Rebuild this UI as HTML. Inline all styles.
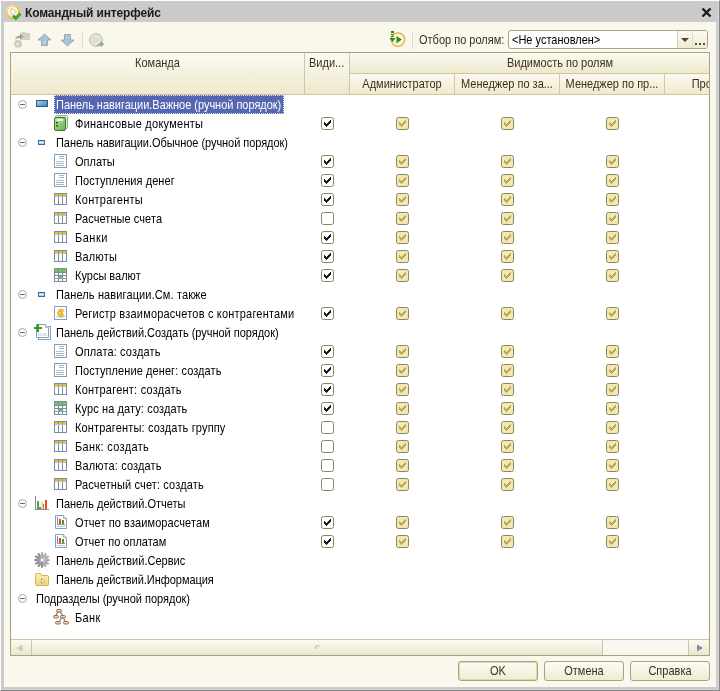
<!DOCTYPE html>
<html><head><meta charset="utf-8">
<style>
*{margin:0;padding:0;box-sizing:border-box}
html,body{width:720px;height:691px;overflow:hidden;background:#cbcbcb;font-family:"Liberation Sans",sans-serif;font-size:11px;color:#000}
.abs{position:absolute}
#frame{position:absolute;left:0;top:0;width:720px;height:691px;background:#cbcbcb;border-top:1px solid #fdfdfd;border-left:1px solid #fdfdfd;border-right:1px solid #878787;border-bottom:1px solid #878787;box-shadow:inset -1px -1px 0 #d6d6d6}
#content{position:absolute;left:4px;top:22px;width:712px;height:665px;background:#faf7ed}
#title{position:absolute;left:25px;top:5px;font-weight:bold;font-size:12px;color:#1c1c1c;line-height:16px;letter-spacing:-0.15px}
#grid{position:absolute;left:10px;top:52px;width:700px;height:604px;border:1px solid #a9a37c;background:#fff;overflow:hidden}
.hdr{position:absolute;background:linear-gradient(#fbfaf3,#eee8ca);color:#3a3020;text-align:center;line-height:20px}
.vs{position:absolute;width:1px;background:#cdc7aa}
.hs{position:absolute;height:1px;background:#cdc7aa}
.txt{position:absolute;height:19px;line-height:19px;white-space:nowrap;padding-top:1px}
.t{display:inline-block;transform:scaleY(1.12);transform-origin:0 13px}
.t2{display:inline-block;transform:scaleY(1.12);transform-origin:0 calc(50% + 3.8px)}
.sel{background:#5666b0;color:#fff;outline:1px dotted #e0e4f4;outline-offset:-1px;padding-left:2px;padding-right:3px;margin-left:-2px}
.exp{position:absolute;left:18px;width:9px;height:9px;border:1px solid #a8a8a8;border-radius:50%}
.exp::after{content:"";position:absolute;left:1px;top:3px;width:5px;height:1px;background:#6a6a6a}
.ic{position:absolute;line-height:0}
.chk{position:absolute;width:13px;height:13px;line-height:0}
.btn{position:absolute;top:661px;width:80px;height:20px;border:1px solid #aaa27a;border-radius:3px;background:linear-gradient(#fdfcf6,#f0ebd4);text-align:center;line-height:18px;color:#3a3020}
</style></head><body>
<div id="root" style="position:absolute;left:0;top:0;width:720px;height:691px;will-change:transform">
<div id="frame"></div>
<div id="content"></div>
<div class="ic" style="left:5px;top:4px"><svg width="17" height="17"><defs><linearGradient id="gt" x1="0" y1="0" x2="1" y2="1"><stop offset="0" stop-color="#f6e8a0"/><stop offset=".5" stop-color="#ecc850"/><stop offset="1" stop-color="#d4a838"/></linearGradient></defs><circle cx="8" cy="7.8" r="6.2" fill="#fdf6d8" stroke="url(#gt)" stroke-width="2"/><path d="M6.2 4.2L11.6 7.8L6.2 11.4z" fill="#fff" stroke="#c0bcb0" stroke-width=".8"/><path d="M8.2 11.8L10.8 14.3L15.3 9.6" fill="none" stroke="#2a8e1c" stroke-width="2.8"/><path d="M8.6 12.1L10.8 14L15 9.8" fill="none" stroke="#68cc48" stroke-width="1"/></svg></div>
<div id="title">Командный интерфейс</div>
<div class="ic" style="left:701px;top:7px"><svg width="11" height="11"><path d="M1.5 1.5L9.5 9.5M9.5 1.5L1.5 9.5" stroke="#1a1a1a" stroke-width="2.4"/></svg></div>

<!-- toolbar -->
<div class="ic" style="left:13px;top:31px"><svg width="18" height="18"><path d="M8.5 1H12L13 2H17V9H8.5z" fill="#d4d0bc"/><path d="M2 8.5C2.5 6 4.5 4.8 7 4.8V2L10.5 5.5L7 9V7C5 7 3.5 7.5 2 8.5z" fill="#8cac8c"/><circle cx="5" cy="12.8" r="4" fill="#d2cebe"/><circle cx="4.7" cy="13" r="1.3" fill="#e8ecf0"/></svg></div>
<div class="ic" style="left:37px;top:33px"><svg width="16" height="14"><path d="M7.5 1L14 7H10.5V12.5H4.5V7H1z" fill="#b0c3d1" stroke="#8ea4b6" stroke-width=".9"/><rect x="6" y="8" width="3" height="3" fill="#c0d0dc"/></svg></div>
<div class="ic" style="left:60px;top:33px"><svg width="16" height="14"><path d="M4.5 1.5H10.5V7H14L7.5 13L1 7H4.5z" fill="#b0c3d1" stroke="#8ea4b6" stroke-width=".9"/></svg></div>
<div class="abs" style="left:82px;top:31px;width:1px;height:18px;background:#dedad0"></div>
<div class="ic" style="left:88px;top:32px"><svg width="18" height="17"><circle cx="8" cy="8" r="6.6" fill="#dddbc8" stroke="#cfccb6" stroke-width="1"/><circle cx="8" cy="8" r="4.8" fill="#e7e5d6"/><path d="M5.6 4.8L10.8 8L5.6 11.2z" fill="#d8d8d4"/><path d="M8.5 14.5C9.5 12.2 11 11.2 12.6 11.2V9L16.2 12.2L12.6 15.2V13.2C11 13.2 10 13.6 8.5 14.5z" fill="#8cac8c"/></svg></div>

<div class="ic" style="left:389px;top:30px"><svg width="18" height="18"><circle cx="9" cy="9.6" r="6.8" fill="#fbf4d0" stroke="#d8b040" stroke-width="1.2"/><path d="M7.5 6L12.8 9.6L7.5 13.2z" fill="#2a8a1a"/><rect x="2" y="1" width="3" height="2" fill="#2a8a1a"/><rect x="2" y="4" width="3" height="1" fill="#2a8a1a"/><rect x="2" y="6" width="3" height="1" fill="#2a8a1a"/><path d="M0.5 8h6L3.5 12z" fill="#2a8a1a"/></svg></div>
<div class="abs" style="left:412px;top:31px;width:1px;height:18px;background:#dedad0"></div>
<div class="abs" style="left:419px;top:31px;line-height:18px;color:#3a3020"><span class="t2">Отбор по ролям:</span></div>
<div class="abs" style="left:508px;top:30px;width:200px;height:19px;border:1px solid #aaa47e;border-radius:3px;background:#fff;overflow:hidden">
  <div class="abs" style="left:3px;top:1px;line-height:17px;color:#000"><span class="t2">&lt;Не установлен&gt;</span></div>
  <div class="abs" style="left:168px;top:0;width:30px;height:17px;border-left:1px solid #d8d2b4;background:linear-gradient(#fcfbf4,#efead2)"></div>
  <div class="abs" style="left:183px;top:0;width:1px;height:17px;background:#e2ddc4"></div>
  <svg class="abs" style="left:172px;top:7px" width="9" height="5"><path d="M0 0H8L4 4z" fill="#5a4420"/></svg>
  <svg class="abs" style="left:186px;top:12px" width="12" height="3"><rect x="0" y="0" width="2" height="2" fill="#5e4a26"/><rect x="4" y="0" width="2" height="2" fill="#5e4a26"/><rect x="8" y="0" width="2" height="2" fill="#5e4a26"/></svg>
</div>

<div id="grid">
  <!-- header -->
  <div class="hdr" style="left:0;top:0;width:293px;height:42px;line-height:20px"><span class="t2">Команда</span></div>
  <div class="hdr" style="left:294px;top:0;width:44px;height:42px;text-align:left;padding-left:4px"><span class="t2">Види...</span></div>
  <div class="hdr" style="left:339px;top:0;width:420px;height:20px"><span class="t2">Видимость по ролям</span></div>
  <div class="hdr" style="left:339px;top:21px;width:104px;height:21px"><span class="t2">Администратор</span></div>
  <div class="hdr" style="left:444px;top:21px;width:104px;height:21px"><span class="t2">Менеджер по за...</span></div>
  <div class="hdr" style="left:549px;top:21px;width:104px;height:21px"><span class="t2">Менеджер по пр...</span></div>
  <div class="hdr" style="left:654px;top:21px;width:104px;height:21px"><span class="t2">Продавец</span></div>
  <div class="vs" style="left:293px;top:0;height:42px"></div>
  <div class="vs" style="left:338px;top:0;height:42px"></div>
  <div class="vs" style="left:443px;top:21px;height:21px"></div>
  <div class="vs" style="left:548px;top:21px;height:21px"></div>
  <div class="vs" style="left:653px;top:21px;height:21px"></div>
  <div class="hs" style="left:339px;top:20px;width:400px"></div>
  <div class="hs" style="left:0;top:41px;width:700px"></div>
  <!-- scrollbar -->
  <div class="abs" style="left:0;top:586px;width:698px;height:16px;background:#f8f6ef;border-top:1px solid #cdc7aa"></div>
  <div class="abs" style="left:0;top:587px;width:21px;height:15px;background:linear-gradient(#fbfaf3,#ebe6ce);border-right:1px solid #cdc7aa"></div>
  <div class="abs" style="left:21px;top:587px;width:571px;height:15px;background:linear-gradient(#fbfaf3,#ebe6ce);border-right:1px solid #cdc7aa"></div>
  <div class="abs" style="left:677px;top:587px;width:21px;height:15px;background:linear-gradient(#fbfaf3,#ebe6ce);border-left:1px solid #cdc7aa"></div>
  <svg class="abs" style="left:5px;top:591px" width="8" height="8"><path d="M0.5 4L6.5 0.5V7.5z" fill="#c8c8c0"/></svg>
  <svg class="abs" style="left:685px;top:591px" width="8" height="8"><path d="M7 4L1 0.5V7.5z" fill="#8a8aa0"/></svg>
  <div class="abs" style="left:304px;top:592px;width:5px;height:5px;border-radius:50%;border:1px solid;border-color:#c4c2ae #e6e4d6 #f6f4e8 #c4c2ae;background:#ece9da"></div>
</div>
<div class="exp" style="top:100px"></div>
<div class="ic" style="left:34px;top:96px"><svg width="16" height="16"><defs><linearGradient id="gni" x1="0" y1="0" x2="1" y2="1"><stop offset="0" stop-color="#b8d8f0"/><stop offset="1" stop-color="#3a78b0"/></linearGradient></defs><rect x="2.5" y="4.5" width="11" height="6" fill="url(#gni)" stroke="#2c5a82"/></svg></div>
<div class="txt sel" style="left:56px;top:95px;letter-spacing:-0.026px"><span class="t">Панель навигации.Важное (ручной порядок)</span></div>
<div class="ic" style="left:53px;top:115px"><svg width="16" height="16"><defs><linearGradient id="gfin" x1="0" y1="0" x2="1" y2="1"><stop offset="0" stop-color="#b8e4a0"/><stop offset="1" stop-color="#68b050"/></linearGradient></defs><rect x="2.5" y="0.5" width="12" height="13" rx="1" fill="#d8e8d0" stroke="#90b090"/><rect x="1.5" y="2.5" width="11" height="13" rx="1.5" fill="url(#gfin)" stroke="#3c7c2c"/><rect x="4" y="4" width="6" height="2" fill="#eef8e8"/><rect x="3" y="7" width="2" height="1.6" fill="#2a6020"/><rect x="3" y="10" width="2" height="1.6" fill="#2a6020"/></svg></div>
<div class="txt" style="left:75px;top:114px;letter-spacing:0.263px"><span class="t">Финансовые документы</span></div>
<div class="chk" style="left:321px;top:117px"><svg width="13" height="13"><rect x="0.5" y="0.5" width="12" height="12" rx="2" fill="#fff" stroke="#8c8660"/><path d="M9 3h1v1h-1zM8 4h2v1h-2zM3 5h1v1h-1zM7 5h3v1h-3zM3 6h2v1h-2zM6 6h3v1h-3zM3 7h5v1h-5zM4 8h3v1h-3zM5 9h1v1h-1z" fill="#1a1a1a"/></svg></div>
<div class="chk" style="left:396px;top:117px"><svg width="13" height="13"><rect x="0.5" y="0.5" width="12" height="12" rx="2" fill="#f2e8b0" stroke="#8c8660"/><path d="M9 3h1v1h-1zM8 4h2v1h-2zM3 5h1v1h-1zM7 5h3v1h-3zM3 6h2v1h-2zM6 6h3v1h-3zM3 7h5v1h-5zM4 8h3v1h-3zM5 9h1v1h-1z" fill="#b8a862"/></svg></div>
<div class="chk" style="left:501px;top:117px"><svg width="13" height="13"><rect x="0.5" y="0.5" width="12" height="12" rx="2" fill="#f2e8b0" stroke="#8c8660"/><path d="M9 3h1v1h-1zM8 4h2v1h-2zM3 5h1v1h-1zM7 5h3v1h-3zM3 6h2v1h-2zM6 6h3v1h-3zM3 7h5v1h-5zM4 8h3v1h-3zM5 9h1v1h-1z" fill="#b8a862"/></svg></div>
<div class="chk" style="left:606px;top:117px"><svg width="13" height="13"><rect x="0.5" y="0.5" width="12" height="12" rx="2" fill="#f2e8b0" stroke="#8c8660"/><path d="M9 3h1v1h-1zM8 4h2v1h-2zM3 5h1v1h-1zM7 5h3v1h-3zM3 6h2v1h-2zM6 6h3v1h-3zM3 7h5v1h-5zM4 8h3v1h-3zM5 9h1v1h-1z" fill="#b8a862"/></svg></div>
<div class="exp" style="top:138px"></div>
<div class="ic" style="left:34px;top:134px"><svg width="16" height="16"><rect x="4.5" y="6.5" width="6" height="4" fill="#a8d0ee" stroke="#3a70a0"/><rect x="5" y="8" width="5" height="1" fill="#e8f4fc"/></svg></div>
<div class="txt" style="left:56px;top:133px;letter-spacing:-0.050px"><span class="t">Панель навигации.Обычное (ручной порядок)</span></div>
<div class="ic" style="left:53px;top:153px"><svg width="16" height="16"><rect x="1.5" y="1.5" width="12" height="13" fill="#fff" stroke="#84a0b8"/><rect x="6" y="3" width="5" height="1" fill="#a0b8cc"/><rect x="6" y="5" width="5" height="1" fill="#a0b8cc"/><rect x="3" y="8" width="8" height="1" fill="#b0c4d4"/><rect x="3" y="10" width="8" height="1" fill="#a0b8cc"/><rect x="3" y="12" width="8" height="1" fill="#a0b8cc"/></svg></div>
<div class="txt" style="left:75px;top:152px;letter-spacing:0.000px"><span class="t">Оплаты</span></div>
<div class="chk" style="left:321px;top:155px"><svg width="13" height="13"><rect x="0.5" y="0.5" width="12" height="12" rx="2" fill="#fff" stroke="#8c8660"/><path d="M9 3h1v1h-1zM8 4h2v1h-2zM3 5h1v1h-1zM7 5h3v1h-3zM3 6h2v1h-2zM6 6h3v1h-3zM3 7h5v1h-5zM4 8h3v1h-3zM5 9h1v1h-1z" fill="#1a1a1a"/></svg></div>
<div class="chk" style="left:396px;top:155px"><svg width="13" height="13"><rect x="0.5" y="0.5" width="12" height="12" rx="2" fill="#f2e8b0" stroke="#8c8660"/><path d="M9 3h1v1h-1zM8 4h2v1h-2zM3 5h1v1h-1zM7 5h3v1h-3zM3 6h2v1h-2zM6 6h3v1h-3zM3 7h5v1h-5zM4 8h3v1h-3zM5 9h1v1h-1z" fill="#b8a862"/></svg></div>
<div class="chk" style="left:501px;top:155px"><svg width="13" height="13"><rect x="0.5" y="0.5" width="12" height="12" rx="2" fill="#f2e8b0" stroke="#8c8660"/><path d="M9 3h1v1h-1zM8 4h2v1h-2zM3 5h1v1h-1zM7 5h3v1h-3zM3 6h2v1h-2zM6 6h3v1h-3zM3 7h5v1h-5zM4 8h3v1h-3zM5 9h1v1h-1z" fill="#b8a862"/></svg></div>
<div class="chk" style="left:606px;top:155px"><svg width="13" height="13"><rect x="0.5" y="0.5" width="12" height="12" rx="2" fill="#f2e8b0" stroke="#8c8660"/><path d="M9 3h1v1h-1zM8 4h2v1h-2zM3 5h1v1h-1zM7 5h3v1h-3zM3 6h2v1h-2zM6 6h3v1h-3zM3 7h5v1h-5zM4 8h3v1h-3zM5 9h1v1h-1z" fill="#b8a862"/></svg></div>
<div class="ic" style="left:53px;top:172px"><svg width="16" height="16"><rect x="1.5" y="1.5" width="12" height="13" fill="#fff" stroke="#84a0b8"/><rect x="6" y="3" width="5" height="1" fill="#a0b8cc"/><rect x="6" y="5" width="5" height="1" fill="#a0b8cc"/><rect x="3" y="8" width="8" height="1" fill="#b0c4d4"/><rect x="3" y="10" width="8" height="1" fill="#a0b8cc"/><rect x="3" y="12" width="8" height="1" fill="#a0b8cc"/></svg></div>
<div class="txt" style="left:75px;top:171px;letter-spacing:0.062px"><span class="t">Поступления денег</span></div>
<div class="chk" style="left:321px;top:174px"><svg width="13" height="13"><rect x="0.5" y="0.5" width="12" height="12" rx="2" fill="#fff" stroke="#8c8660"/><path d="M9 3h1v1h-1zM8 4h2v1h-2zM3 5h1v1h-1zM7 5h3v1h-3zM3 6h2v1h-2zM6 6h3v1h-3zM3 7h5v1h-5zM4 8h3v1h-3zM5 9h1v1h-1z" fill="#1a1a1a"/></svg></div>
<div class="chk" style="left:396px;top:174px"><svg width="13" height="13"><rect x="0.5" y="0.5" width="12" height="12" rx="2" fill="#f2e8b0" stroke="#8c8660"/><path d="M9 3h1v1h-1zM8 4h2v1h-2zM3 5h1v1h-1zM7 5h3v1h-3zM3 6h2v1h-2zM6 6h3v1h-3zM3 7h5v1h-5zM4 8h3v1h-3zM5 9h1v1h-1z" fill="#b8a862"/></svg></div>
<div class="chk" style="left:501px;top:174px"><svg width="13" height="13"><rect x="0.5" y="0.5" width="12" height="12" rx="2" fill="#f2e8b0" stroke="#8c8660"/><path d="M9 3h1v1h-1zM8 4h2v1h-2zM3 5h1v1h-1zM7 5h3v1h-3zM3 6h2v1h-2zM6 6h3v1h-3zM3 7h5v1h-5zM4 8h3v1h-3zM5 9h1v1h-1z" fill="#b8a862"/></svg></div>
<div class="chk" style="left:606px;top:174px"><svg width="13" height="13"><rect x="0.5" y="0.5" width="12" height="12" rx="2" fill="#f2e8b0" stroke="#8c8660"/><path d="M9 3h1v1h-1zM8 4h2v1h-2zM3 5h1v1h-1zM7 5h3v1h-3zM3 6h2v1h-2zM6 6h3v1h-3zM3 7h5v1h-5zM4 8h3v1h-3zM5 9h1v1h-1z" fill="#b8a862"/></svg></div>
<div class="ic" style="left:53px;top:191px"><svg width="16" height="16"><rect x="1.5" y="2.5" width="12" height="11" fill="#fafcfe" stroke="#7a8ea0"/><rect x="5" y="2" width="1" height="12" fill="#7a8ea0"/><rect x="9" y="2" width="1" height="12" fill="#7a8ea0"/><rect x="2" y="3" width="3" height="2" fill="#f2c418"/><rect x="6" y="3" width="3" height="2" fill="#f2c418"/><rect x="10" y="3" width="3" height="2" fill="#f2c418"/><rect x="2" y="5" width="11" height="1" fill="#b4c4d2"/></svg></div>
<div class="txt" style="left:75px;top:190px;letter-spacing:0.300px"><span class="t">Контрагенты</span></div>
<div class="chk" style="left:321px;top:193px"><svg width="13" height="13"><rect x="0.5" y="0.5" width="12" height="12" rx="2" fill="#fff" stroke="#8c8660"/><path d="M9 3h1v1h-1zM8 4h2v1h-2zM3 5h1v1h-1zM7 5h3v1h-3zM3 6h2v1h-2zM6 6h3v1h-3zM3 7h5v1h-5zM4 8h3v1h-3zM5 9h1v1h-1z" fill="#1a1a1a"/></svg></div>
<div class="chk" style="left:396px;top:193px"><svg width="13" height="13"><rect x="0.5" y="0.5" width="12" height="12" rx="2" fill="#f2e8b0" stroke="#8c8660"/><path d="M9 3h1v1h-1zM8 4h2v1h-2zM3 5h1v1h-1zM7 5h3v1h-3zM3 6h2v1h-2zM6 6h3v1h-3zM3 7h5v1h-5zM4 8h3v1h-3zM5 9h1v1h-1z" fill="#b8a862"/></svg></div>
<div class="chk" style="left:501px;top:193px"><svg width="13" height="13"><rect x="0.5" y="0.5" width="12" height="12" rx="2" fill="#f2e8b0" stroke="#8c8660"/><path d="M9 3h1v1h-1zM8 4h2v1h-2zM3 5h1v1h-1zM7 5h3v1h-3zM3 6h2v1h-2zM6 6h3v1h-3zM3 7h5v1h-5zM4 8h3v1h-3zM5 9h1v1h-1z" fill="#b8a862"/></svg></div>
<div class="chk" style="left:606px;top:193px"><svg width="13" height="13"><rect x="0.5" y="0.5" width="12" height="12" rx="2" fill="#f2e8b0" stroke="#8c8660"/><path d="M9 3h1v1h-1zM8 4h2v1h-2zM3 5h1v1h-1zM7 5h3v1h-3zM3 6h2v1h-2zM6 6h3v1h-3zM3 7h5v1h-5zM4 8h3v1h-3zM5 9h1v1h-1z" fill="#b8a862"/></svg></div>
<div class="ic" style="left:53px;top:210px"><svg width="16" height="16"><rect x="1.5" y="2.5" width="12" height="11" fill="#fafcfe" stroke="#7a8ea0"/><rect x="5" y="2" width="1" height="12" fill="#7a8ea0"/><rect x="9" y="2" width="1" height="12" fill="#7a8ea0"/><rect x="2" y="3" width="3" height="2" fill="#f2c418"/><rect x="6" y="3" width="3" height="2" fill="#f2c418"/><rect x="10" y="3" width="3" height="2" fill="#f2c418"/><rect x="2" y="5" width="11" height="1" fill="#b4c4d2"/></svg></div>
<div class="txt" style="left:75px;top:209px;letter-spacing:0.071px"><span class="t">Расчетные счета</span></div>
<div class="chk" style="left:321px;top:212px"><svg width="13" height="13"><rect x="0.5" y="0.5" width="12" height="12" rx="2" fill="#fff" stroke="#8c8660"/></svg></div>
<div class="chk" style="left:396px;top:212px"><svg width="13" height="13"><rect x="0.5" y="0.5" width="12" height="12" rx="2" fill="#f2e8b0" stroke="#8c8660"/><path d="M9 3h1v1h-1zM8 4h2v1h-2zM3 5h1v1h-1zM7 5h3v1h-3zM3 6h2v1h-2zM6 6h3v1h-3zM3 7h5v1h-5zM4 8h3v1h-3zM5 9h1v1h-1z" fill="#b8a862"/></svg></div>
<div class="chk" style="left:501px;top:212px"><svg width="13" height="13"><rect x="0.5" y="0.5" width="12" height="12" rx="2" fill="#f2e8b0" stroke="#8c8660"/><path d="M9 3h1v1h-1zM8 4h2v1h-2zM3 5h1v1h-1zM7 5h3v1h-3zM3 6h2v1h-2zM6 6h3v1h-3zM3 7h5v1h-5zM4 8h3v1h-3zM5 9h1v1h-1z" fill="#b8a862"/></svg></div>
<div class="chk" style="left:606px;top:212px"><svg width="13" height="13"><rect x="0.5" y="0.5" width="12" height="12" rx="2" fill="#f2e8b0" stroke="#8c8660"/><path d="M9 3h1v1h-1zM8 4h2v1h-2zM3 5h1v1h-1zM7 5h3v1h-3zM3 6h2v1h-2zM6 6h3v1h-3zM3 7h5v1h-5zM4 8h3v1h-3zM5 9h1v1h-1z" fill="#b8a862"/></svg></div>
<div class="ic" style="left:53px;top:229px"><svg width="16" height="16"><rect x="1.5" y="2.5" width="12" height="11" fill="#fafcfe" stroke="#7a8ea0"/><rect x="5" y="2" width="1" height="12" fill="#7a8ea0"/><rect x="9" y="2" width="1" height="12" fill="#7a8ea0"/><rect x="2" y="3" width="3" height="2" fill="#f2c418"/><rect x="6" y="3" width="3" height="2" fill="#f2c418"/><rect x="10" y="3" width="3" height="2" fill="#f2c418"/><rect x="2" y="5" width="11" height="1" fill="#b4c4d2"/></svg></div>
<div class="txt" style="left:75px;top:228px;letter-spacing:0.500px"><span class="t">Банки</span></div>
<div class="chk" style="left:321px;top:231px"><svg width="13" height="13"><rect x="0.5" y="0.5" width="12" height="12" rx="2" fill="#fff" stroke="#8c8660"/><path d="M9 3h1v1h-1zM8 4h2v1h-2zM3 5h1v1h-1zM7 5h3v1h-3zM3 6h2v1h-2zM6 6h3v1h-3zM3 7h5v1h-5zM4 8h3v1h-3zM5 9h1v1h-1z" fill="#1a1a1a"/></svg></div>
<div class="chk" style="left:396px;top:231px"><svg width="13" height="13"><rect x="0.5" y="0.5" width="12" height="12" rx="2" fill="#f2e8b0" stroke="#8c8660"/><path d="M9 3h1v1h-1zM8 4h2v1h-2zM3 5h1v1h-1zM7 5h3v1h-3zM3 6h2v1h-2zM6 6h3v1h-3zM3 7h5v1h-5zM4 8h3v1h-3zM5 9h1v1h-1z" fill="#b8a862"/></svg></div>
<div class="chk" style="left:501px;top:231px"><svg width="13" height="13"><rect x="0.5" y="0.5" width="12" height="12" rx="2" fill="#f2e8b0" stroke="#8c8660"/><path d="M9 3h1v1h-1zM8 4h2v1h-2zM3 5h1v1h-1zM7 5h3v1h-3zM3 6h2v1h-2zM6 6h3v1h-3zM3 7h5v1h-5zM4 8h3v1h-3zM5 9h1v1h-1z" fill="#b8a862"/></svg></div>
<div class="chk" style="left:606px;top:231px"><svg width="13" height="13"><rect x="0.5" y="0.5" width="12" height="12" rx="2" fill="#f2e8b0" stroke="#8c8660"/><path d="M9 3h1v1h-1zM8 4h2v1h-2zM3 5h1v1h-1zM7 5h3v1h-3zM3 6h2v1h-2zM6 6h3v1h-3zM3 7h5v1h-5zM4 8h3v1h-3zM5 9h1v1h-1z" fill="#b8a862"/></svg></div>
<div class="ic" style="left:53px;top:248px"><svg width="16" height="16"><rect x="1.5" y="2.5" width="12" height="11" fill="#fafcfe" stroke="#7a8ea0"/><rect x="5" y="2" width="1" height="12" fill="#7a8ea0"/><rect x="9" y="2" width="1" height="12" fill="#7a8ea0"/><rect x="2" y="3" width="3" height="2" fill="#f2c418"/><rect x="6" y="3" width="3" height="2" fill="#f2c418"/><rect x="10" y="3" width="3" height="2" fill="#f2c418"/><rect x="2" y="5" width="11" height="1" fill="#b4c4d2"/></svg></div>
<div class="txt" style="left:75px;top:247px;letter-spacing:0.200px"><span class="t">Валюты</span></div>
<div class="chk" style="left:321px;top:250px"><svg width="13" height="13"><rect x="0.5" y="0.5" width="12" height="12" rx="2" fill="#fff" stroke="#8c8660"/><path d="M9 3h1v1h-1zM8 4h2v1h-2zM3 5h1v1h-1zM7 5h3v1h-3zM3 6h2v1h-2zM6 6h3v1h-3zM3 7h5v1h-5zM4 8h3v1h-3zM5 9h1v1h-1z" fill="#1a1a1a"/></svg></div>
<div class="chk" style="left:396px;top:250px"><svg width="13" height="13"><rect x="0.5" y="0.5" width="12" height="12" rx="2" fill="#f2e8b0" stroke="#8c8660"/><path d="M9 3h1v1h-1zM8 4h2v1h-2zM3 5h1v1h-1zM7 5h3v1h-3zM3 6h2v1h-2zM6 6h3v1h-3zM3 7h5v1h-5zM4 8h3v1h-3zM5 9h1v1h-1z" fill="#b8a862"/></svg></div>
<div class="chk" style="left:501px;top:250px"><svg width="13" height="13"><rect x="0.5" y="0.5" width="12" height="12" rx="2" fill="#f2e8b0" stroke="#8c8660"/><path d="M9 3h1v1h-1zM8 4h2v1h-2zM3 5h1v1h-1zM7 5h3v1h-3zM3 6h2v1h-2zM6 6h3v1h-3zM3 7h5v1h-5zM4 8h3v1h-3zM5 9h1v1h-1z" fill="#b8a862"/></svg></div>
<div class="chk" style="left:606px;top:250px"><svg width="13" height="13"><rect x="0.5" y="0.5" width="12" height="12" rx="2" fill="#f2e8b0" stroke="#8c8660"/><path d="M9 3h1v1h-1zM8 4h2v1h-2zM3 5h1v1h-1zM7 5h3v1h-3zM3 6h2v1h-2zM6 6h3v1h-3zM3 7h5v1h-5zM4 8h3v1h-3zM5 9h1v1h-1z" fill="#b8a862"/></svg></div>
<div class="ic" style="left:53px;top:267px"><svg width="16" height="16"><rect x="1.5" y="1.5" width="12" height="13" fill="#fafcfe" stroke="#7a8ea0"/><rect x="2" y="2" width="11" height="3" fill="#78c450"/><rect x="5" y="2" width="1" height="12" fill="#7a8ea0"/><rect x="9" y="2" width="1" height="12" fill="#7a8ea0"/><rect x="2" y="5" width="11" height="1" fill="#7a8ea0"/><rect x="2" y="8" width="11" height="1" fill="#7a8ea0"/><rect x="2" y="11" width="11" height="1" fill="#8a9cae"/><rect x="6" y="9" width="3" height="2" fill="#78c450"/></svg></div>
<div class="txt" style="left:75px;top:266px;letter-spacing:0.000px"><span class="t">Курсы валют</span></div>
<div class="chk" style="left:321px;top:269px"><svg width="13" height="13"><rect x="0.5" y="0.5" width="12" height="12" rx="2" fill="#fff" stroke="#8c8660"/><path d="M9 3h1v1h-1zM8 4h2v1h-2zM3 5h1v1h-1zM7 5h3v1h-3zM3 6h2v1h-2zM6 6h3v1h-3zM3 7h5v1h-5zM4 8h3v1h-3zM5 9h1v1h-1z" fill="#1a1a1a"/></svg></div>
<div class="chk" style="left:396px;top:269px"><svg width="13" height="13"><rect x="0.5" y="0.5" width="12" height="12" rx="2" fill="#f2e8b0" stroke="#8c8660"/><path d="M9 3h1v1h-1zM8 4h2v1h-2zM3 5h1v1h-1zM7 5h3v1h-3zM3 6h2v1h-2zM6 6h3v1h-3zM3 7h5v1h-5zM4 8h3v1h-3zM5 9h1v1h-1z" fill="#b8a862"/></svg></div>
<div class="chk" style="left:501px;top:269px"><svg width="13" height="13"><rect x="0.5" y="0.5" width="12" height="12" rx="2" fill="#f2e8b0" stroke="#8c8660"/><path d="M9 3h1v1h-1zM8 4h2v1h-2zM3 5h1v1h-1zM7 5h3v1h-3zM3 6h2v1h-2zM6 6h3v1h-3zM3 7h5v1h-5zM4 8h3v1h-3zM5 9h1v1h-1z" fill="#b8a862"/></svg></div>
<div class="chk" style="left:606px;top:269px"><svg width="13" height="13"><rect x="0.5" y="0.5" width="12" height="12" rx="2" fill="#f2e8b0" stroke="#8c8660"/><path d="M9 3h1v1h-1zM8 4h2v1h-2zM3 5h1v1h-1zM7 5h3v1h-3zM3 6h2v1h-2zM6 6h3v1h-3zM3 7h5v1h-5zM4 8h3v1h-3zM5 9h1v1h-1z" fill="#b8a862"/></svg></div>
<div class="exp" style="top:290px"></div>
<div class="ic" style="left:34px;top:286px"><svg width="16" height="16"><rect x="4.5" y="6.5" width="6" height="4" fill="#a8d0ee" stroke="#3a70a0"/><rect x="5" y="8" width="5" height="1" fill="#e8f4fc"/></svg></div>
<div class="txt" style="left:56px;top:285px;letter-spacing:0.120px"><span class="t">Панель навигации.См. также</span></div>
<div class="ic" style="left:53px;top:305px"><svg width="16" height="16"><rect x="1.5" y="1.5" width="12" height="13" fill="#fff" stroke="#84a0b8"/><rect x="3" y="10" width="9" height="3" fill="#dfe9f3"/><ellipse cx="8" cy="5.6" rx="2.8" ry="1.4" fill="#f4cc30" stroke="#d89a18" stroke-width=".7"/><ellipse cx="7" cy="8" rx="2.8" ry="1.4" fill="#f8dc50" stroke="#d89a18" stroke-width=".7"/><ellipse cx="8" cy="10.4" rx="2.8" ry="1.4" fill="#f2c828" stroke="#d89a18" stroke-width=".7"/></svg></div>
<div class="txt" style="left:75px;top:304px;letter-spacing:0.189px"><span class="t">Регистр взаиморасчетов с контрагентами</span></div>
<div class="chk" style="left:321px;top:307px"><svg width="13" height="13"><rect x="0.5" y="0.5" width="12" height="12" rx="2" fill="#fff" stroke="#8c8660"/><path d="M9 3h1v1h-1zM8 4h2v1h-2zM3 5h1v1h-1zM7 5h3v1h-3zM3 6h2v1h-2zM6 6h3v1h-3zM3 7h5v1h-5zM4 8h3v1h-3zM5 9h1v1h-1z" fill="#1a1a1a"/></svg></div>
<div class="chk" style="left:396px;top:307px"><svg width="13" height="13"><rect x="0.5" y="0.5" width="12" height="12" rx="2" fill="#f2e8b0" stroke="#8c8660"/><path d="M9 3h1v1h-1zM8 4h2v1h-2zM3 5h1v1h-1zM7 5h3v1h-3zM3 6h2v1h-2zM6 6h3v1h-3zM3 7h5v1h-5zM4 8h3v1h-3zM5 9h1v1h-1z" fill="#b8a862"/></svg></div>
<div class="chk" style="left:501px;top:307px"><svg width="13" height="13"><rect x="0.5" y="0.5" width="12" height="12" rx="2" fill="#f2e8b0" stroke="#8c8660"/><path d="M9 3h1v1h-1zM8 4h2v1h-2zM3 5h1v1h-1zM7 5h3v1h-3zM3 6h2v1h-2zM6 6h3v1h-3zM3 7h5v1h-5zM4 8h3v1h-3zM5 9h1v1h-1z" fill="#b8a862"/></svg></div>
<div class="chk" style="left:606px;top:307px"><svg width="13" height="13"><rect x="0.5" y="0.5" width="12" height="12" rx="2" fill="#f2e8b0" stroke="#8c8660"/><path d="M9 3h1v1h-1zM8 4h2v1h-2zM3 5h1v1h-1zM7 5h3v1h-3zM3 6h2v1h-2zM6 6h3v1h-3zM3 7h5v1h-5zM4 8h3v1h-3zM5 9h1v1h-1z" fill="#b8a862"/></svg></div>
<div class="exp" style="top:328px"></div>
<div class="ic" style="left:33px;top:323px"><svg width="18" height="18"><rect x="5.5" y="3.5" width="12" height="13" fill="#fff" stroke="#8aa0b4"/><path d="M3.5 1.5H12.5L15.5 4.5V14.5H3.5z" fill="#fff" stroke="#84a0b8"/><path d="M12.5 1.5V4.5H15.5" fill="#e0e8f0" stroke="#a0b4c8"/><rect x="5" y="10" width="9" height="3" fill="#dde8f0"/><rect x="4" y="1" width="2" height="8" fill="#3a9a18"/><rect x="1" y="4" width="8" height="2" fill="#3a9a18"/></svg></div>
<div class="txt" style="left:56px;top:323px;letter-spacing:-0.026px"><span class="t">Панель действий.Создать (ручной порядок)</span></div>
<div class="ic" style="left:53px;top:343px"><svg width="16" height="16"><rect x="1.5" y="1.5" width="12" height="13" fill="#fff" stroke="#84a0b8"/><rect x="6" y="3" width="5" height="1" fill="#a0b8cc"/><rect x="6" y="5" width="5" height="1" fill="#a0b8cc"/><rect x="3" y="8" width="8" height="1" fill="#b0c4d4"/><rect x="3" y="10" width="8" height="1" fill="#a0b8cc"/><rect x="3" y="12" width="8" height="1" fill="#a0b8cc"/></svg></div>
<div class="txt" style="left:75px;top:342px;letter-spacing:0.143px"><span class="t">Оплата: создать</span></div>
<div class="chk" style="left:321px;top:345px"><svg width="13" height="13"><rect x="0.5" y="0.5" width="12" height="12" rx="2" fill="#fff" stroke="#8c8660"/><path d="M9 3h1v1h-1zM8 4h2v1h-2zM3 5h1v1h-1zM7 5h3v1h-3zM3 6h2v1h-2zM6 6h3v1h-3zM3 7h5v1h-5zM4 8h3v1h-3zM5 9h1v1h-1z" fill="#1a1a1a"/></svg></div>
<div class="chk" style="left:396px;top:345px"><svg width="13" height="13"><rect x="0.5" y="0.5" width="12" height="12" rx="2" fill="#f2e8b0" stroke="#8c8660"/><path d="M9 3h1v1h-1zM8 4h2v1h-2zM3 5h1v1h-1zM7 5h3v1h-3zM3 6h2v1h-2zM6 6h3v1h-3zM3 7h5v1h-5zM4 8h3v1h-3zM5 9h1v1h-1z" fill="#b8a862"/></svg></div>
<div class="chk" style="left:501px;top:345px"><svg width="13" height="13"><rect x="0.5" y="0.5" width="12" height="12" rx="2" fill="#f2e8b0" stroke="#8c8660"/><path d="M9 3h1v1h-1zM8 4h2v1h-2zM3 5h1v1h-1zM7 5h3v1h-3zM3 6h2v1h-2zM6 6h3v1h-3zM3 7h5v1h-5zM4 8h3v1h-3zM5 9h1v1h-1z" fill="#b8a862"/></svg></div>
<div class="chk" style="left:606px;top:345px"><svg width="13" height="13"><rect x="0.5" y="0.5" width="12" height="12" rx="2" fill="#f2e8b0" stroke="#8c8660"/><path d="M9 3h1v1h-1zM8 4h2v1h-2zM3 5h1v1h-1zM7 5h3v1h-3zM3 6h2v1h-2zM6 6h3v1h-3zM3 7h5v1h-5zM4 8h3v1h-3zM5 9h1v1h-1z" fill="#b8a862"/></svg></div>
<div class="ic" style="left:53px;top:362px"><svg width="16" height="16"><rect x="1.5" y="1.5" width="12" height="13" fill="#fff" stroke="#84a0b8"/><rect x="6" y="3" width="5" height="1" fill="#a0b8cc"/><rect x="6" y="5" width="5" height="1" fill="#a0b8cc"/><rect x="3" y="8" width="8" height="1" fill="#b0c4d4"/><rect x="3" y="10" width="8" height="1" fill="#a0b8cc"/><rect x="3" y="12" width="8" height="1" fill="#a0b8cc"/></svg></div>
<div class="txt" style="left:75px;top:361px;letter-spacing:0.080px"><span class="t">Поступление денег: создать</span></div>
<div class="chk" style="left:321px;top:364px"><svg width="13" height="13"><rect x="0.5" y="0.5" width="12" height="12" rx="2" fill="#fff" stroke="#8c8660"/><path d="M9 3h1v1h-1zM8 4h2v1h-2zM3 5h1v1h-1zM7 5h3v1h-3zM3 6h2v1h-2zM6 6h3v1h-3zM3 7h5v1h-5zM4 8h3v1h-3zM5 9h1v1h-1z" fill="#1a1a1a"/></svg></div>
<div class="chk" style="left:396px;top:364px"><svg width="13" height="13"><rect x="0.5" y="0.5" width="12" height="12" rx="2" fill="#f2e8b0" stroke="#8c8660"/><path d="M9 3h1v1h-1zM8 4h2v1h-2zM3 5h1v1h-1zM7 5h3v1h-3zM3 6h2v1h-2zM6 6h3v1h-3zM3 7h5v1h-5zM4 8h3v1h-3zM5 9h1v1h-1z" fill="#b8a862"/></svg></div>
<div class="chk" style="left:501px;top:364px"><svg width="13" height="13"><rect x="0.5" y="0.5" width="12" height="12" rx="2" fill="#f2e8b0" stroke="#8c8660"/><path d="M9 3h1v1h-1zM8 4h2v1h-2zM3 5h1v1h-1zM7 5h3v1h-3zM3 6h2v1h-2zM6 6h3v1h-3zM3 7h5v1h-5zM4 8h3v1h-3zM5 9h1v1h-1z" fill="#b8a862"/></svg></div>
<div class="chk" style="left:606px;top:364px"><svg width="13" height="13"><rect x="0.5" y="0.5" width="12" height="12" rx="2" fill="#f2e8b0" stroke="#8c8660"/><path d="M9 3h1v1h-1zM8 4h2v1h-2zM3 5h1v1h-1zM7 5h3v1h-3zM3 6h2v1h-2zM6 6h3v1h-3zM3 7h5v1h-5zM4 8h3v1h-3zM5 9h1v1h-1z" fill="#b8a862"/></svg></div>
<div class="ic" style="left:53px;top:381px"><svg width="16" height="16"><rect x="1.5" y="2.5" width="12" height="11" fill="#fafcfe" stroke="#7a8ea0"/><rect x="5" y="2" width="1" height="12" fill="#7a8ea0"/><rect x="9" y="2" width="1" height="12" fill="#7a8ea0"/><rect x="2" y="3" width="3" height="2" fill="#f2c418"/><rect x="6" y="3" width="3" height="2" fill="#f2c418"/><rect x="10" y="3" width="3" height="2" fill="#f2c418"/><rect x="2" y="5" width="11" height="1" fill="#b4c4d2"/></svg></div>
<div class="txt" style="left:75px;top:380px;letter-spacing:0.222px"><span class="t">Контрагент: создать</span></div>
<div class="chk" style="left:321px;top:383px"><svg width="13" height="13"><rect x="0.5" y="0.5" width="12" height="12" rx="2" fill="#fff" stroke="#8c8660"/><path d="M9 3h1v1h-1zM8 4h2v1h-2zM3 5h1v1h-1zM7 5h3v1h-3zM3 6h2v1h-2zM6 6h3v1h-3zM3 7h5v1h-5zM4 8h3v1h-3zM5 9h1v1h-1z" fill="#1a1a1a"/></svg></div>
<div class="chk" style="left:396px;top:383px"><svg width="13" height="13"><rect x="0.5" y="0.5" width="12" height="12" rx="2" fill="#f2e8b0" stroke="#8c8660"/><path d="M9 3h1v1h-1zM8 4h2v1h-2zM3 5h1v1h-1zM7 5h3v1h-3zM3 6h2v1h-2zM6 6h3v1h-3zM3 7h5v1h-5zM4 8h3v1h-3zM5 9h1v1h-1z" fill="#b8a862"/></svg></div>
<div class="chk" style="left:501px;top:383px"><svg width="13" height="13"><rect x="0.5" y="0.5" width="12" height="12" rx="2" fill="#f2e8b0" stroke="#8c8660"/><path d="M9 3h1v1h-1zM8 4h2v1h-2zM3 5h1v1h-1zM7 5h3v1h-3zM3 6h2v1h-2zM6 6h3v1h-3zM3 7h5v1h-5zM4 8h3v1h-3zM5 9h1v1h-1z" fill="#b8a862"/></svg></div>
<div class="chk" style="left:606px;top:383px"><svg width="13" height="13"><rect x="0.5" y="0.5" width="12" height="12" rx="2" fill="#f2e8b0" stroke="#8c8660"/><path d="M9 3h1v1h-1zM8 4h2v1h-2zM3 5h1v1h-1zM7 5h3v1h-3zM3 6h2v1h-2zM6 6h3v1h-3zM3 7h5v1h-5zM4 8h3v1h-3zM5 9h1v1h-1z" fill="#b8a862"/></svg></div>
<div class="ic" style="left:53px;top:400px"><svg width="16" height="16"><rect x="1.5" y="1.5" width="12" height="13" fill="#fafcfe" stroke="#7a8ea0"/><rect x="2" y="2" width="11" height="3" fill="#78c450"/><rect x="5" y="2" width="1" height="12" fill="#7a8ea0"/><rect x="9" y="2" width="1" height="12" fill="#7a8ea0"/><rect x="2" y="5" width="11" height="1" fill="#7a8ea0"/><rect x="2" y="8" width="11" height="1" fill="#7a8ea0"/><rect x="2" y="11" width="11" height="1" fill="#8a9cae"/><rect x="6" y="9" width="3" height="2" fill="#78c450"/></svg></div>
<div class="txt" style="left:75px;top:399px;letter-spacing:0.100px"><span class="t">Курс на дату: создать</span></div>
<div class="chk" style="left:321px;top:402px"><svg width="13" height="13"><rect x="0.5" y="0.5" width="12" height="12" rx="2" fill="#fff" stroke="#8c8660"/><path d="M9 3h1v1h-1zM8 4h2v1h-2zM3 5h1v1h-1zM7 5h3v1h-3zM3 6h2v1h-2zM6 6h3v1h-3zM3 7h5v1h-5zM4 8h3v1h-3zM5 9h1v1h-1z" fill="#1a1a1a"/></svg></div>
<div class="chk" style="left:396px;top:402px"><svg width="13" height="13"><rect x="0.5" y="0.5" width="12" height="12" rx="2" fill="#f2e8b0" stroke="#8c8660"/><path d="M9 3h1v1h-1zM8 4h2v1h-2zM3 5h1v1h-1zM7 5h3v1h-3zM3 6h2v1h-2zM6 6h3v1h-3zM3 7h5v1h-5zM4 8h3v1h-3zM5 9h1v1h-1z" fill="#b8a862"/></svg></div>
<div class="chk" style="left:501px;top:402px"><svg width="13" height="13"><rect x="0.5" y="0.5" width="12" height="12" rx="2" fill="#f2e8b0" stroke="#8c8660"/><path d="M9 3h1v1h-1zM8 4h2v1h-2zM3 5h1v1h-1zM7 5h3v1h-3zM3 6h2v1h-2zM6 6h3v1h-3zM3 7h5v1h-5zM4 8h3v1h-3zM5 9h1v1h-1z" fill="#b8a862"/></svg></div>
<div class="chk" style="left:606px;top:402px"><svg width="13" height="13"><rect x="0.5" y="0.5" width="12" height="12" rx="2" fill="#f2e8b0" stroke="#8c8660"/><path d="M9 3h1v1h-1zM8 4h2v1h-2zM3 5h1v1h-1zM7 5h3v1h-3zM3 6h2v1h-2zM6 6h3v1h-3zM3 7h5v1h-5zM4 8h3v1h-3zM5 9h1v1h-1z" fill="#b8a862"/></svg></div>
<div class="ic" style="left:53px;top:419px"><svg width="16" height="16"><rect x="1.5" y="2.5" width="12" height="11" fill="#fafcfe" stroke="#7a8ea0"/><rect x="5" y="2" width="1" height="12" fill="#7a8ea0"/><rect x="9" y="2" width="1" height="12" fill="#7a8ea0"/><rect x="2" y="3" width="3" height="2" fill="#f2c418"/><rect x="6" y="3" width="3" height="2" fill="#f2c418"/><rect x="10" y="3" width="3" height="2" fill="#f2c418"/><rect x="2" y="5" width="11" height="1" fill="#b4c4d2"/></svg></div>
<div class="txt" style="left:75px;top:418px;letter-spacing:0.154px"><span class="t">Контрагенты: создать группу</span></div>
<div class="chk" style="left:321px;top:421px"><svg width="13" height="13"><rect x="0.5" y="0.5" width="12" height="12" rx="2" fill="#fff" stroke="#8c8660"/></svg></div>
<div class="chk" style="left:396px;top:421px"><svg width="13" height="13"><rect x="0.5" y="0.5" width="12" height="12" rx="2" fill="#f2e8b0" stroke="#8c8660"/><path d="M9 3h1v1h-1zM8 4h2v1h-2zM3 5h1v1h-1zM7 5h3v1h-3zM3 6h2v1h-2zM6 6h3v1h-3zM3 7h5v1h-5zM4 8h3v1h-3zM5 9h1v1h-1z" fill="#b8a862"/></svg></div>
<div class="chk" style="left:501px;top:421px"><svg width="13" height="13"><rect x="0.5" y="0.5" width="12" height="12" rx="2" fill="#f2e8b0" stroke="#8c8660"/><path d="M9 3h1v1h-1zM8 4h2v1h-2zM3 5h1v1h-1zM7 5h3v1h-3zM3 6h2v1h-2zM6 6h3v1h-3zM3 7h5v1h-5zM4 8h3v1h-3zM5 9h1v1h-1z" fill="#b8a862"/></svg></div>
<div class="chk" style="left:606px;top:421px"><svg width="13" height="13"><rect x="0.5" y="0.5" width="12" height="12" rx="2" fill="#f2e8b0" stroke="#8c8660"/><path d="M9 3h1v1h-1zM8 4h2v1h-2zM3 5h1v1h-1zM7 5h3v1h-3zM3 6h2v1h-2zM6 6h3v1h-3zM3 7h5v1h-5zM4 8h3v1h-3zM5 9h1v1h-1z" fill="#b8a862"/></svg></div>
<div class="ic" style="left:53px;top:438px"><svg width="16" height="16"><rect x="1.5" y="2.5" width="12" height="11" fill="#fafcfe" stroke="#7a8ea0"/><rect x="5" y="2" width="1" height="12" fill="#7a8ea0"/><rect x="9" y="2" width="1" height="12" fill="#7a8ea0"/><rect x="2" y="3" width="3" height="2" fill="#f2c418"/><rect x="6" y="3" width="3" height="2" fill="#f2c418"/><rect x="10" y="3" width="3" height="2" fill="#f2c418"/><rect x="2" y="5" width="11" height="1" fill="#b4c4d2"/></svg></div>
<div class="txt" style="left:75px;top:437px;letter-spacing:0.333px"><span class="t">Банк: создать</span></div>
<div class="chk" style="left:321px;top:440px"><svg width="13" height="13"><rect x="0.5" y="0.5" width="12" height="12" rx="2" fill="#fff" stroke="#8c8660"/></svg></div>
<div class="chk" style="left:396px;top:440px"><svg width="13" height="13"><rect x="0.5" y="0.5" width="12" height="12" rx="2" fill="#f2e8b0" stroke="#8c8660"/><path d="M9 3h1v1h-1zM8 4h2v1h-2zM3 5h1v1h-1zM7 5h3v1h-3zM3 6h2v1h-2zM6 6h3v1h-3zM3 7h5v1h-5zM4 8h3v1h-3zM5 9h1v1h-1z" fill="#b8a862"/></svg></div>
<div class="chk" style="left:501px;top:440px"><svg width="13" height="13"><rect x="0.5" y="0.5" width="12" height="12" rx="2" fill="#f2e8b0" stroke="#8c8660"/><path d="M9 3h1v1h-1zM8 4h2v1h-2zM3 5h1v1h-1zM7 5h3v1h-3zM3 6h2v1h-2zM6 6h3v1h-3zM3 7h5v1h-5zM4 8h3v1h-3zM5 9h1v1h-1z" fill="#b8a862"/></svg></div>
<div class="chk" style="left:606px;top:440px"><svg width="13" height="13"><rect x="0.5" y="0.5" width="12" height="12" rx="2" fill="#f2e8b0" stroke="#8c8660"/><path d="M9 3h1v1h-1zM8 4h2v1h-2zM3 5h1v1h-1zM7 5h3v1h-3zM3 6h2v1h-2zM6 6h3v1h-3zM3 7h5v1h-5zM4 8h3v1h-3zM5 9h1v1h-1z" fill="#b8a862"/></svg></div>
<div class="ic" style="left:53px;top:457px"><svg width="16" height="16"><rect x="1.5" y="2.5" width="12" height="11" fill="#fafcfe" stroke="#7a8ea0"/><rect x="5" y="2" width="1" height="12" fill="#7a8ea0"/><rect x="9" y="2" width="1" height="12" fill="#7a8ea0"/><rect x="2" y="3" width="3" height="2" fill="#f2c418"/><rect x="6" y="3" width="3" height="2" fill="#f2c418"/><rect x="10" y="3" width="3" height="2" fill="#f2c418"/><rect x="2" y="5" width="11" height="1" fill="#b4c4d2"/></svg></div>
<div class="txt" style="left:75px;top:456px;letter-spacing:0.143px"><span class="t">Валюта: создать</span></div>
<div class="chk" style="left:321px;top:459px"><svg width="13" height="13"><rect x="0.5" y="0.5" width="12" height="12" rx="2" fill="#fff" stroke="#8c8660"/></svg></div>
<div class="chk" style="left:396px;top:459px"><svg width="13" height="13"><rect x="0.5" y="0.5" width="12" height="12" rx="2" fill="#f2e8b0" stroke="#8c8660"/><path d="M9 3h1v1h-1zM8 4h2v1h-2zM3 5h1v1h-1zM7 5h3v1h-3zM3 6h2v1h-2zM6 6h3v1h-3zM3 7h5v1h-5zM4 8h3v1h-3zM5 9h1v1h-1z" fill="#b8a862"/></svg></div>
<div class="chk" style="left:501px;top:459px"><svg width="13" height="13"><rect x="0.5" y="0.5" width="12" height="12" rx="2" fill="#f2e8b0" stroke="#8c8660"/><path d="M9 3h1v1h-1zM8 4h2v1h-2zM3 5h1v1h-1zM7 5h3v1h-3zM3 6h2v1h-2zM6 6h3v1h-3zM3 7h5v1h-5zM4 8h3v1h-3zM5 9h1v1h-1z" fill="#b8a862"/></svg></div>
<div class="chk" style="left:606px;top:459px"><svg width="13" height="13"><rect x="0.5" y="0.5" width="12" height="12" rx="2" fill="#f2e8b0" stroke="#8c8660"/><path d="M9 3h1v1h-1zM8 4h2v1h-2zM3 5h1v1h-1zM7 5h3v1h-3zM3 6h2v1h-2zM6 6h3v1h-3zM3 7h5v1h-5zM4 8h3v1h-3zM5 9h1v1h-1z" fill="#b8a862"/></svg></div>
<div class="ic" style="left:53px;top:476px"><svg width="16" height="16"><rect x="1.5" y="2.5" width="12" height="11" fill="#fafcfe" stroke="#7a8ea0"/><rect x="5" y="2" width="1" height="12" fill="#7a8ea0"/><rect x="9" y="2" width="1" height="12" fill="#7a8ea0"/><rect x="2" y="3" width="3" height="2" fill="#f2c418"/><rect x="6" y="3" width="3" height="2" fill="#f2c418"/><rect x="10" y="3" width="3" height="2" fill="#f2c418"/><rect x="2" y="5" width="11" height="1" fill="#b4c4d2"/></svg></div>
<div class="txt" style="left:75px;top:475px;letter-spacing:0.136px"><span class="t">Расчетный счет: создать</span></div>
<div class="chk" style="left:321px;top:478px"><svg width="13" height="13"><rect x="0.5" y="0.5" width="12" height="12" rx="2" fill="#fff" stroke="#8c8660"/></svg></div>
<div class="chk" style="left:396px;top:478px"><svg width="13" height="13"><rect x="0.5" y="0.5" width="12" height="12" rx="2" fill="#f2e8b0" stroke="#8c8660"/><path d="M9 3h1v1h-1zM8 4h2v1h-2zM3 5h1v1h-1zM7 5h3v1h-3zM3 6h2v1h-2zM6 6h3v1h-3zM3 7h5v1h-5zM4 8h3v1h-3zM5 9h1v1h-1z" fill="#b8a862"/></svg></div>
<div class="chk" style="left:501px;top:478px"><svg width="13" height="13"><rect x="0.5" y="0.5" width="12" height="12" rx="2" fill="#f2e8b0" stroke="#8c8660"/><path d="M9 3h1v1h-1zM8 4h2v1h-2zM3 5h1v1h-1zM7 5h3v1h-3zM3 6h2v1h-2zM6 6h3v1h-3zM3 7h5v1h-5zM4 8h3v1h-3zM5 9h1v1h-1z" fill="#b8a862"/></svg></div>
<div class="chk" style="left:606px;top:478px"><svg width="13" height="13"><rect x="0.5" y="0.5" width="12" height="12" rx="2" fill="#f2e8b0" stroke="#8c8660"/><path d="M9 3h1v1h-1zM8 4h2v1h-2zM3 5h1v1h-1zM7 5h3v1h-3zM3 6h2v1h-2zM6 6h3v1h-3zM3 7h5v1h-5zM4 8h3v1h-3zM5 9h1v1h-1z" fill="#b8a862"/></svg></div>
<div class="exp" style="top:499px"></div>
<div class="ic" style="left:34px;top:495px"><svg width="16" height="16"><rect x="1" y="1" width="1" height="14" fill="#8c8c8c"/><rect x="1" y="14" width="14" height="1" fill="#8c8c8c"/><rect x="3" y="6" width="2" height="8" fill="#5aa040"/><rect x="5" y="12" width="2" height="2" fill="#4a90d0"/><rect x="7" y="7" width="2" height="7" fill="#f0dc88"/><rect x="9" y="9" width="1" height="5" fill="#a08868"/><rect x="11" y="5" width="2" height="9" fill="#e84830"/></svg></div>
<div class="txt" style="left:56px;top:494px;letter-spacing:0.000px"><span class="t">Панель действий.Отчеты</span></div>
<div class="ic" style="left:53px;top:514px"><svg width="16" height="16"><path d="M2.5 1.5H10.5L13.5 4.5V14.5H2.5z" fill="#fff" stroke="#84a0b8"/><path d="M10.5 1.5V4.5H13.5" fill="#dce6f0" stroke="#a0b4c8"/><rect x="4" y="3" width="1" height="8" fill="#909090"/><rect x="6" y="5" width="2" height="5" fill="#e84830"/><rect x="9" y="6" width="2" height="4" fill="#40a020"/><rect x="4" y="10" width="8" height="1" fill="#9a8a9a"/><rect x="4" y="12" width="8" height="1" fill="#b0c8dc"/></svg></div>
<div class="txt" style="left:75px;top:513px;letter-spacing:0.091px"><span class="t">Отчет по взаиморасчетам</span></div>
<div class="chk" style="left:321px;top:516px"><svg width="13" height="13"><rect x="0.5" y="0.5" width="12" height="12" rx="2" fill="#fff" stroke="#8c8660"/><path d="M9 3h1v1h-1zM8 4h2v1h-2zM3 5h1v1h-1zM7 5h3v1h-3zM3 6h2v1h-2zM6 6h3v1h-3zM3 7h5v1h-5zM4 8h3v1h-3zM5 9h1v1h-1z" fill="#1a1a1a"/></svg></div>
<div class="chk" style="left:396px;top:516px"><svg width="13" height="13"><rect x="0.5" y="0.5" width="12" height="12" rx="2" fill="#f2e8b0" stroke="#8c8660"/><path d="M9 3h1v1h-1zM8 4h2v1h-2zM3 5h1v1h-1zM7 5h3v1h-3zM3 6h2v1h-2zM6 6h3v1h-3zM3 7h5v1h-5zM4 8h3v1h-3zM5 9h1v1h-1z" fill="#b8a862"/></svg></div>
<div class="chk" style="left:501px;top:516px"><svg width="13" height="13"><rect x="0.5" y="0.5" width="12" height="12" rx="2" fill="#f2e8b0" stroke="#8c8660"/><path d="M9 3h1v1h-1zM8 4h2v1h-2zM3 5h1v1h-1zM7 5h3v1h-3zM3 6h2v1h-2zM6 6h3v1h-3zM3 7h5v1h-5zM4 8h3v1h-3zM5 9h1v1h-1z" fill="#b8a862"/></svg></div>
<div class="chk" style="left:606px;top:516px"><svg width="13" height="13"><rect x="0.5" y="0.5" width="12" height="12" rx="2" fill="#f2e8b0" stroke="#8c8660"/><path d="M9 3h1v1h-1zM8 4h2v1h-2zM3 5h1v1h-1zM7 5h3v1h-3zM3 6h2v1h-2zM6 6h3v1h-3zM3 7h5v1h-5zM4 8h3v1h-3zM5 9h1v1h-1z" fill="#b8a862"/></svg></div>
<div class="ic" style="left:53px;top:533px"><svg width="16" height="16"><path d="M2.5 1.5H10.5L13.5 4.5V14.5H2.5z" fill="#fff" stroke="#84a0b8"/><path d="M10.5 1.5V4.5H13.5" fill="#dce6f0" stroke="#a0b4c8"/><rect x="4" y="3" width="1" height="8" fill="#909090"/><rect x="6" y="5" width="2" height="5" fill="#e84830"/><rect x="9" y="6" width="2" height="4" fill="#40a020"/><rect x="4" y="10" width="8" height="1" fill="#9a8a9a"/><rect x="4" y="12" width="8" height="1" fill="#b0c8dc"/></svg></div>
<div class="txt" style="left:75px;top:532px;letter-spacing:0.000px"><span class="t">Отчет по оплатам</span></div>
<div class="chk" style="left:321px;top:535px"><svg width="13" height="13"><rect x="0.5" y="0.5" width="12" height="12" rx="2" fill="#fff" stroke="#8c8660"/><path d="M9 3h1v1h-1zM8 4h2v1h-2zM3 5h1v1h-1zM7 5h3v1h-3zM3 6h2v1h-2zM6 6h3v1h-3zM3 7h5v1h-5zM4 8h3v1h-3zM5 9h1v1h-1z" fill="#1a1a1a"/></svg></div>
<div class="chk" style="left:396px;top:535px"><svg width="13" height="13"><rect x="0.5" y="0.5" width="12" height="12" rx="2" fill="#f2e8b0" stroke="#8c8660"/><path d="M9 3h1v1h-1zM8 4h2v1h-2zM3 5h1v1h-1zM7 5h3v1h-3zM3 6h2v1h-2zM6 6h3v1h-3zM3 7h5v1h-5zM4 8h3v1h-3zM5 9h1v1h-1z" fill="#b8a862"/></svg></div>
<div class="chk" style="left:501px;top:535px"><svg width="13" height="13"><rect x="0.5" y="0.5" width="12" height="12" rx="2" fill="#f2e8b0" stroke="#8c8660"/><path d="M9 3h1v1h-1zM8 4h2v1h-2zM3 5h1v1h-1zM7 5h3v1h-3zM3 6h2v1h-2zM6 6h3v1h-3zM3 7h5v1h-5zM4 8h3v1h-3zM5 9h1v1h-1z" fill="#b8a862"/></svg></div>
<div class="chk" style="left:606px;top:535px"><svg width="13" height="13"><rect x="0.5" y="0.5" width="12" height="12" rx="2" fill="#f2e8b0" stroke="#8c8660"/><path d="M9 3h1v1h-1zM8 4h2v1h-2zM3 5h1v1h-1zM7 5h3v1h-3zM3 6h2v1h-2zM6 6h3v1h-3zM3 7h5v1h-5zM4 8h3v1h-3zM5 9h1v1h-1z" fill="#b8a862"/></svg></div>
<div class="ic" style="left:33px;top:551px"><svg width="18" height="18" viewBox="0 0 18 18"><defs><radialGradient id="gsv" cx=".4" cy=".35" r=".7"><stop offset="0" stop-color="#d8d8dc"/><stop offset="1" stop-color="#808088"/></radialGradient></defs><g fill="url(#gsv)"><circle cx="9" cy="9" r="5.6"/><rect x="8" y="1.3" width="2" height="15.4"/><rect x="8" y="1.3" width="2" height="15.4" transform="rotate(30 9 9)"/><rect x="8" y="1.3" width="2" height="15.4" transform="rotate(60 9 9)"/><rect x="8" y="1.3" width="2" height="15.4" transform="rotate(90 9 9)"/><rect x="8" y="1.3" width="2" height="15.4" transform="rotate(120 9 9)"/><rect x="8" y="1.3" width="2" height="15.4" transform="rotate(150 9 9)"/></g><circle cx="9" cy="9" r="1.6" fill="#fff"/></svg></div>
<div class="txt" style="left:56px;top:551px;letter-spacing:0.000px"><span class="t">Панель действий.Сервис</span></div>
<div class="ic" style="left:34px;top:571px"><svg width="16" height="16"><defs><linearGradient id="ginf" x1="0" y1="0" x2="0" y2="1"><stop offset="0" stop-color="#fbf0b8"/><stop offset="1" stop-color="#f0d470"/></linearGradient></defs><path d="M1.5 3.5Q1.5 2.5 2.5 2.5H6.5L7.5 4.5H13.5Q14.5 4.5 14.5 5.5V13.5Q14.5 14.5 13.5 14.5H2.5Q1.5 14.5 1.5 13.5z" fill="url(#ginf)" stroke="#d4b450"/><path d="M7.5 7.5V12.5L11 10z" fill="#fff" stroke="#a09880" stroke-width=".8"/></svg></div>
<div class="txt" style="left:56px;top:570px;letter-spacing:-0.040px"><span class="t">Панель действий.Информация</span></div>
<div class="exp" style="top:594px"></div>
<div class="txt" style="left:36px;top:589px;letter-spacing:0.000px"><span class="t">Подразделы (ручной порядок)</span></div>
<div class="ic" style="left:53px;top:609px"><svg width="16" height="16"><path d="M5 2.5L3 6.5M7 2.5L9.5 6.5M9 8.5L6 12.5M10 8.5L12.5 12.5" stroke="#5a88b8" stroke-width="1.2"/><g fill="#f0d4b8" stroke="#a86838" stroke-width="1"><rect x="3.5" y="0.5" width="5" height="2.5" rx="1.25"/><rect x="0.5" y="6.5" width="5" height="2.5" rx="1.25"/><rect x="7.5" y="6.5" width="5" height="2.5" rx="1.25"/><rect x="2.5" y="12.5" width="5" height="2.5" rx="1.25"/><rect x="10.5" y="12.5" width="5" height="2.5" rx="1.25"/></g></svg></div>
<div class="txt" style="left:75px;top:608px;letter-spacing:0.333px"><span class="t">Банк</span></div>
<div class="btn" style="left:458px;box-shadow:inset 0 0 0 1px #e2d8a6"><span class="t2">OK</span></div>
<div class="btn" style="left:544px"><span class="t2">Отмена</span></div>
<div class="btn" style="left:630px"><span class="t2">Справка</span></div>
</div>
</body></html>
